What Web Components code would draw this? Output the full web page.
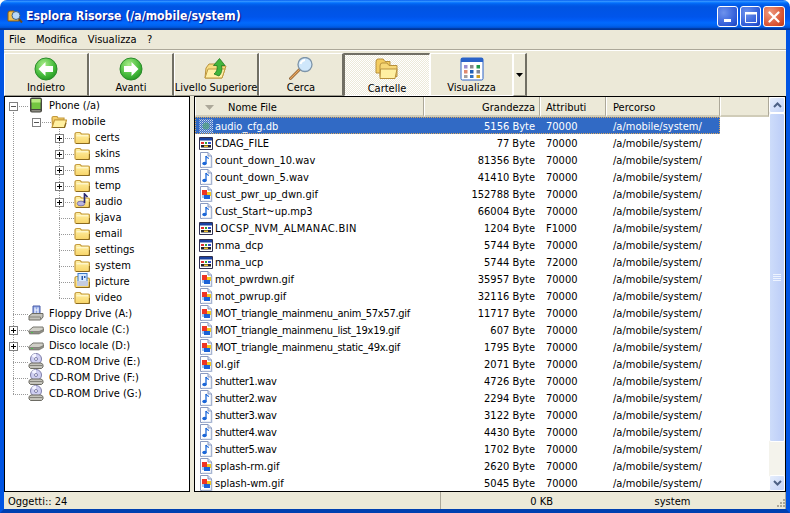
<!DOCTYPE html>
<html><head><meta charset="utf-8"><title>Esplora Risorse</title>
<style>
html,body{margin:0;padding:0;background:#fff;}
body{width:790px;height:513px;overflow:hidden;font:11px "DejaVu Sans Condensed","DejaVu Sans",sans-serif;font-stretch:condensed;color:#000;}
</style></head><body>
<x-window>
  <x-titlebar slot="title">Esplora Risorse (/a/mobile/system)</x-titlebar>
  <x-menubar slot="menu"><span>File</span><span>Modifica</span><span>Visualizza</span><span>?</span></x-menubar>
  <x-toolbar slot="toolbar">
    <x-tool icon="back" label="Indietro" w="85"></x-tool>
    <x-tool icon="forward" label="Avanti" w="85"></x-tool>
    <x-tool icon="up" label="Livello Superiore" w="85"></x-tool>
    <x-tool icon="search" label="Cerca" w="85"></x-tool>
    <x-tool icon="folders" label="Cartelle" w="86" pressed></x-tool>
    <x-tool icon="views" label="Visualizza" w="83" flat></x-tool>
    <x-tool w="14" drop></x-tool>
  </x-toolbar>
  <x-tree slot="tree"></x-tree>
  <x-files slot="files"></x-files>
  <x-status slot="status"></x-status>
</x-window>
<script>
const FOLDER=`<defs><linearGradient id="f" x1="0" y1="0" x2="0" y2="1"><stop offset="0" stop-color="#fff2a8"/><stop offset="1" stop-color="#f8d468"/></linearGradient></defs><path d="M1 5.500Q1 3.500 3 3.500H6L7.500 5H14Q15.500 5 15.500 6.500V13Q15.500 14.500 14 14.500H2.500Q1 14.500 1 13Z" fill="url(#f)" stroke="#c49a3c" stroke-width="1.200"/><path d="M2.500 6.800H14" stroke="#fffbe0"/><path d="M2 14.500H14.500Q15.500 14.500 15.500 13V9" fill="none" stroke="#8a6a20" stroke-width="1.200"/>`;
const GEM=`<rect x="4" y="4" width="5" height="5" fill="#ee3524"/><rect x="9" y="6" width="4" height="4" fill="#f4c81c"/><rect x="6" y="9" width="6" height="4" fill="#1a62d8"/><rect x="4" y="9" width="2" height="3" fill="#9ec6f4"/>`;
const PAGE=`<path d="M2.500 .5H10L13.500 4V15.500H2.500Z" fill="#fff" stroke="#8a9ac0"/><path d="M10 .5V4H13.500" fill="#d4def0" stroke="#8a9ac0"/><path d="M13.500 5V15.500H4" fill="none" stroke="#b8c4dc" stroke-width="2" opacity=".6"/>`;
const ICONS={
 phone:[16,`<rect x="2" y="0.500" width="12" height="15" rx="2" fill="#46463e"/><rect x="3.500" y="2" width="9" height="10" fill="#74c640"/><rect x="3.500" y="2" width="9" height="3.500" fill="#b8ea80"/><rect x="3.500" y="13" width="9" height="1.500" fill="#8c8b82"/>`],
 folder:[16,FOLDER],
 open:[16,`<path d="M1 5Q1 3.500 2.500 3.500H6L7 5H13V7H4L1.500 13Z" fill="#f6d06c" stroke="#c49a3c" stroke-width="1.200"/><path d="M3.500 7H15.500L13.500 14.500H1Z" fill="#fff0a0" stroke="#c49a3c" stroke-width="1.200"/><path d="M1.500 14.500H13.500L15 10" fill="none" stroke="#8a6a20" stroke-width="1.200"/>`],
 audio:[16,FOLDER+`<ellipse cx="7" cy="10.500" rx="3.800" ry="2.400" fill="#b8b4e0" stroke="#605a9a" stroke-width=".7"/><path d="M10.500 10V1L13.500 4" fill="none" stroke="#2a2a70" stroke-width="1.700"/>`],
 picture:[16,FOLDER+`<rect x="4" y="0.500" width="9" height="8" fill="#d8eaff" stroke="#3a78c8"/><rect x="7.500" y="3" width="1.500" height="4" fill="#2858a8"/><rect x="10" y="3" width="1.500" height="2" fill="#2858a8"/><rect x="3" y="8" width="11" height="5" fill="#c4cce0"/>`],
 floppy:[16,`<path d="M5 1H12V9H5Z" fill="#8ea6e6" stroke="#4a5ca8"/><path d="M7 2.500V8M10 2.500V8M7 5H10" stroke="#f4f6ff" stroke-width="1.200"/><path d="M1 11L4 8.500H15V12L12.500 15H1Z" fill="#c4c3bb" stroke="#6c6b63"/><path d="M1 12H12.500V14.500" fill="none" stroke="#84837b"/>`],
 hdd:[16,`<path d="M.5 10L5 6H15L15.500 9L11 12H1.500Z" fill="#d0cfc7" stroke="#77766e"/><path d="M1.500 10.500H11L15.500 8.500V10.500L11 13H1.500Z" fill="#8f8e86" stroke="#6c6b63" stroke-width=".6"/><rect x="3" y="11" width="2" height="1" fill="#50c050"/>`],
 cd:[16,`<circle cx="8" cy="6" r="5.500" fill="#cfcff2" stroke="#7e7ea8"/><path d="M8 6L3.500 3A5.500 5.500 0 0 1 8 .5Z" fill="#f4f4ff"/><circle cx="8" cy="6" r="1.500" fill="#fff" stroke="#7e7ea8"/><path d="M1 11.500L3 10H13L15 11.500V14L13.500 15.500H2.500L1 14Z" fill="#c4c3bb" stroke="#6c6b63"/><path d="M1.500 12.500H14.500" stroke="#84837b"/>`],
 db:[16,`<defs><pattern id="d" width="2" height="2" patternUnits="userSpaceOnUse"><rect width="2" height="2" fill="#3d6fc2"/><rect width="1" height="1" fill="#c8d8f0"/><rect x="1" y="1" width="1" height="1" fill="#8fa8d8"/></pattern></defs><rect x="1" y="1" width="14" height="14" fill="url(#d)"/><circle cx="8" cy="8" r="3.500" fill="#4f9f7f" fill-opacity=".75"/>`],
 app:[16,`<path d="M1.500 2.500H14.500V14.500H1.500Z" fill="#fff" stroke="#303050"/><rect x="2" y="3" width="12" height="2.500" fill="#1840a0"/><rect x="3" y="7" width="3" height="2" fill="#e03030"/><rect x="7" y="7" width="2" height="2" fill="#30a030"/><rect x="10" y="7" width="3" height="2" fill="#3050d0"/><rect x="3" y="10" width="10" height="2.500" fill="#20202a"/><rect x="6" y="10.500" width="4" height="1.500" fill="#f0c030"/>`],
 wav:[16,PAGE+`<path d="M8 4V11.500" stroke="#1a66d8" stroke-width="1.300"/><path d="M8 4Q9 6 11 6.500" fill="none" stroke="#1a66d8" stroke-width="1.200"/><ellipse cx="6.500" cy="11.500" rx="2.200" ry="1.700" fill="#1a66d8"/>`],
 gif:[16,PAGE+GEM],
 back:[24,`<defs><radialGradient id="g" cx=".4" cy=".3" r=".8"><stop offset="0" stop-color="#a8ec88"/><stop offset=".6" stop-color="#46bb3c"/><stop offset="1" stop-color="#1c8c1c"/></radialGradient></defs><circle cx="12" cy="12" r="11" fill="url(#g)" stroke="#2a8a2a"/><path d="M4.500 12L11.500 5V9H19V15H11.500V19Z" fill="#fff"/>`],
 forward:[24,`<defs><radialGradient id="h" cx=".4" cy=".3" r=".8"><stop offset="0" stop-color="#a8ec88"/><stop offset=".6" stop-color="#46bb3c"/><stop offset="1" stop-color="#1c8c1c"/></radialGradient></defs><circle cx="12" cy="12" r="11" fill="url(#h)" stroke="#2a8a2a"/><path d="M19.500 12L12.500 5V9H5V15H12.500V19Z" fill="#fff"/>`],
 up:[24,`<path d="M2 11L5 7H13L15 9H22L18 21H1Z" fill="#f7dc82" stroke="#b8913c"/><path d="M4 12H21L18 21H1Z" fill="#fff0a8" stroke="#c09a40"/><path d="M15 19Q19 15 17.500 8.500H21L15.500 1.500L9.500 8.500H13Q14 14 10 17Z" fill="#43b53c" stroke="#207a20" stroke-width=".8"/>`],
 search:[24,`<path d="M1.500 21.500L10.500 12.500" stroke="#8a5a2a" stroke-width="2.800" stroke-linecap="round"/><path d="M1.500 21.500L10.500 12.500" stroke="#e8a860" stroke-width="1.200" stroke-linecap="round"/><circle cx="16" cy="7.500" r="7" fill="#cfe7fb" stroke="#7d94a8" stroke-width="1.300"/><path d="M11.500 7Q12.500 3.500 16 3" fill="none" stroke="#fff" stroke-width="1.800"/>`],
 folders:[24,`<path d="M1 6Q1 3 3 3H8L10 5.500H15V17H1Z" fill="#f4cd60" stroke="#b8913c"/><path d="M5 10Q5 7 7 7H12L14 9.500H22V20.500H5Z" fill="#f7d878" stroke="#b8913c"/><path d="M5.500 13H22L20 22.500H5Z" fill="#fff0a2" stroke="#b8913c"/>`],
 views:[24,`<rect x="1" y="1" width="22" height="22" rx="1.500" fill="#fff" stroke="#2a63c8"/><rect x="1" y="1" width="22" height="4" fill="#2a63c8"/><g fill="#9b8fd0"><rect x="4" y="8" width="3.500" height="3.500"/></g><rect x="10" y="8" width="3.500" height="3.500" fill="#8a8a8a"/><rect x="16.500" y="8" width="3.500" height="3.500" fill="#1f9a4a"/><rect x="4" y="13" width="3.500" height="3.500" fill="#e08a70"/><rect x="10" y="13" width="3.500" height="3.500" fill="#2060b8"/><rect x="16.500" y="13" width="3.500" height="3.500" fill="#808898"/><rect x="4" y="18" width="3.500" height="3" fill="#a0a0a0"/><rect x="10" y="18" width="3.500" height="3" fill="#3070c0"/><rect x="16.500" y="18" width="3.500" height="3" fill="#d0a020"/>`],
 app16:[16,`<path d="M1 5Q1 3 3 3H7L8 5H12V13H1Z" fill="#f0c050" stroke="#8a5a10"/><circle cx="9" cy="7.500" r="4" fill="#b8d8f8" stroke="#406080"/><path d="M12 11L15 14.500" stroke="#6a4a20" stroke-width="2"/>`]
};
let uid=0;
function svg(name){const [s,b]=ICONS[name];const u='u'+(++uid);
  const body=b.replace(/id="(\w)"/g,`id="$1${u}"`).replace(/url\(#(\w)\)/g,`url(#$1${u})`);
  return `<svg xmlns="http://www.w3.org/2000/svg" width="${s}" height="${s}" viewBox="0 0 ${s} ${s}" style="display:block;flex:none">${body}</svg>`;}
function def(tag,fn,css,html){customElements.define(tag,class extends HTMLElement{
  constructor(){super();this.attachShadow({mode:'open'});}
  connectedCallback(){this.shadowRoot.innerHTML=`<style>${css}</style>`+(fn?fn(this):html);}
});}
const F='font:11px "DejaVu Sans Condensed","DejaVu Sans",sans-serif;font-stretch:condensed;';

def('x-window',null,`
:host{display:flex;flex-direction:column;width:790px;height:513px;box-sizing:border-box;background:#ECE9D8;border-radius:7px 7px 0 0;overflow:hidden;}
.body{flex:1;display:flex;flex-direction:column;min-height:0;border-left:4px solid #0054E3;border-right:4px solid #0054E3;border-bottom:4px solid #0040B0;}
.split{flex:1;display:flex;gap:4px;min-height:0;}
`,`<slot name="title"></slot><div class="body"><slot name="menu"></slot><slot name="toolbar"></slot>
<div class="split"><slot name="tree"></slot><slot name="files"></slot></div><slot name="status"></slot></div>`);

def('x-titlebar',h=>`${svg('app16')}<span><slot></slot></span><i class="b">${'<svg width="12" height="12" viewBox="0 0 12 12"><rect x="2" y="8" width="7" height="3" fill="#fff"/></svg>'}</i><i class="b">${'<svg width="12" height="12" viewBox="0 0 12 12"><path d="M.5 1.500H11.500V11.500H.5Z" fill="none" stroke="#fff"/><rect y="1" width="12" height="2.500" fill="#fff"/></svg>'}</i><i class="b x">${'<svg width="12" height="12" viewBox="0 0 12 12"><path d="M1.500 1.500L10.500 10.500M10.500 1.500L1.500 10.500" stroke="#fff" stroke-width="2.200" stroke-linecap="round"/></svg>'}</i>`,`
:host{display:flex;align-items:center;height:30px;box-sizing:border-box;padding:2px 5px 0 7px;color:#fff;font:bold 12.2px "DejaVu Sans Condensed","DejaVu Sans",sans-serif;font-stretch:condensed;text-shadow:1px 1px 1px #0f1089;
background:linear-gradient(to bottom,#0058EE 0,#3593FF 4%,#288EFF 6%,#127DFF 8%,#036FFC 10%,#0262EE 14%,#0057E5 20%,#0054E3 24%,#0055EB 56%,#005BF5 66%,#026AFE 76%,#0062EF 86%,#0052D6 92%,#0040AB 94%,#003092 100%);}
span{flex:1;margin-left:3px;white-space:nowrap;}
.b{flex:none;display:flex;align-items:center;justify-content:center;width:21px;height:21px;box-sizing:border-box;margin:0 0 1px 2px;align-self:flex-start;margin-top:4px;border:1px solid #fff;border-radius:3px;background:radial-gradient(circle at 30% 30%,#6d92ec,#2a57d6 75%,#1c3fb0);}
.x{background:radial-gradient(circle at 30% 30%,#ee9a80,#d8502e 70%,#b83a18);width:22px;}
`);

def('x-menubar',null,`
:host{display:flex;height:20px;box-sizing:border-box;align-items:center;padding-left:5px;gap:10.500px;border-bottom:1px solid #ACA899;${F}}
::slotted(span){white-space:nowrap;}
`,`<slot></slot>`);

def('x-toolbar',null,`
:host{display:flex;height:46px;box-sizing:border-box;padding-top:2px;border-top:1px solid #fff;}
`,`<slot></slot>`);

def('x-tool',h=>{
  const a=k=>h.getAttribute(k);
  if(h.hasAttribute('drop'))return `<svg width="7" height="4" viewBox="0 0 7 4"><path d="M0 0H7L3.500 4Z" fill="#000"/></svg>`;
  return `${svg(a('icon'))}<span>${a('label')}</span>`;
},`
:host{display:flex;flex-direction:column;align-items:center;box-sizing:border-box;height:43px;flex:none;padding-top:3px;gap:0;border:1px solid;border-color:#fff #716F64 #9d9b8e #fff;border-right-width:2px;${F}white-space:nowrap;}
:host([pressed]){background-color:#f4f2e8;background-image:repeating-conic-gradient(#ECE9D8 0 25%,#fff 0 50%);background-size:2px 2px;border-color:#716F64 #fff #fff #716F64;border-width:2px 1px 1px 1px;padding-top:1px;gap:2px;}
:host([flat]){border-color:#fff;border-right:1px solid #fff;}
:host([drop]){justify-content:center;padding:0;border-left:1px solid #fff;}
span{line-height:13px;}
`);
document.querySelectorAll('x-tool').forEach(e=>{e.style.width=e.getAttribute('w')+'px';});

def('x-tree-row',h=>{
  const lv=+h.getAttribute('level');const through=(h.getAttribute('guides')||'').split(',').filter(Boolean).map(Number);
  const kind=h.getAttribute('kind')||'tee';const box=h.getAttribute('box');
  let c='';
  for(let i=0;i<lv;i++)c+=`<div class="cell ${through.includes(i)?'v':''}"></div>`;
  const bx=box?`<svg class="bx" width="9" height="9" viewBox="0 0 9 9"><rect x=".5" y=".5" width="8" height="8" fill="#fff" stroke="#808080"/><path d="M2 4.500H7${box==='plus'?'M4.500 2V7':''}" stroke="${box==='plus'?'#000':'#555'}"/></svg>`:'';
  c+=`<div class="cell h ${kind}">${bx}</div>`;
  return c+svg(h.getAttribute('icon'))+`<span><slot></slot></span>`;
},`
:host{display:flex;height:16px;${F}white-space:nowrap;}
.cell{width:23px;height:16px;flex:none;box-sizing:border-box;}
.bx{display:block;margin:5px 0 0 4px;}
.v{background-repeat:no-repeat;background-image:repeating-linear-gradient(to bottom,#999 0 1px,transparent 1px 2px);background-size:1px 16px;background-position:8px 0;}
.h{background-image:repeating-linear-gradient(to right,#999 0 1px,transparent 1px 2px),repeating-linear-gradient(to bottom,#999 0 1px,transparent 1px 2px);background-repeat:no-repeat;background-size:15px 1px,1px 16px;background-position:8px 9px,8px 0;}
.h.elbow{background-size:15px 1px,1px 9px;}
.h.first{background-size:15px 1px,1px 7px;background-position:8px 9px,8px 9px;}
.h.none{background-size:15px 1px,0 0;}
span{margin-left:5px;line-height:16px;padding-top:1px;}
`);

def('x-tree',h=>{
  const rows=[
   [0,'','first','minus','phone','Phone (/a)'],
   [1,'0','none','minus','open','mobile'],
   [2,'0','tee','plus','folder','certs'],[2,'0','tee','plus','folder','skins'],[2,'0','tee','plus','folder','mms'],[2,'0','tee','plus','folder','temp'],[2,'0','tee','plus','audio','audio'],
   [2,'0','tee','','folder','kjava'],[2,'0','tee','','folder','email'],[2,'0','tee','','folder','settings'],[2,'0','tee','','folder','system'],[2,'0','tee','','picture','picture'],[2,'0','elbow','','folder','video'],
   [0,'','tee','','floppy','Floppy Drive (A:)'],[0,'','tee','plus','hdd','Disco locale (C:)'],[0,'','tee','plus','hdd','Disco locale (D:)'],
   [0,'','tee','','cd','CD-ROM Drive (E:)'],[0,'','tee','','cd','CD-ROM Drive (F:)'],[0,'','elbow','','cd','CD-ROM Drive (G:)']];
  return rows.map(r=>`<x-tree-row level="${r[0]}" guides="${r[1]}" kind="${r[2]}" box="${r[3]}" icon="${r[4]}">${r[5]}</x-tree-row>`).join('');
},`
:host{display:block;width:186px;height:100%;box-sizing:border-box;background:#fff;border:1px solid #000;overflow:hidden;}
`);

def('x-col',null,`
:host{display:flex;align-items:center;box-sizing:border-box;height:20px;padding-top:2px;background:#ECE9D8;border-right:1px solid #ACA899;border-left:1px solid #fff;border-bottom:2px solid #D0CCB8;${F}white-space:nowrap;overflow:hidden;}
:host([end]){justify-content:flex-end;padding-right:4px;}
`,`<slot></slot>`);

def('x-file-row',h=>{
  const a=k=>h.getAttribute(k);
  const ls=h.getAttribute('ls');
  return `<div class="n">${svg(a('type'))}<span${ls?` style="letter-spacing:${ls}px"`:''}>${a('name')}</span></div><div class="s">${a('size')} Byte</div><div class="a">${a('attr')}</div><div class="p">/a/mobile/system/</div>`;
},`
:host{display:grid;grid-template-columns:229px 116px 66px 114px;width:525px;height:17px;box-sizing:border-box;align-items:center;${F}white-space:nowrap;}
:host([sel]){background:#316AC5;color:#fff;outline:1px dotted #d8a860;outline-offset:-1px;}
.n{display:flex;align-items:center;padding-left:3px;}
.n span{margin-left:1px;padding-top:1px;}
.s{text-align:right;padding-right:5px;padding-top:1px;}
.a{padding-left:6px;padding-top:1px;}
.p{padding-left:7px;padding-top:1px;}
`);

def('x-scrollbar',()=>{
  const chev=d=>`<svg width="9" height="6" viewBox="0 0 9 6"><path d="${d}" fill="none" stroke="#4d6185" stroke-width="2"/></svg>`;
  return `<div class="btn">${chev('M1 5L4.500 1.500L8 5')}</div><div class="thumb"><svg width="8" height="8" viewBox="0 0 8 8"><path d="M0 .5H8M0 2.500H8M0 4.500H8M0 6.500H8" stroke="#eef4ff"/></svg></div><div class="track"></div><div class="btn">${chev('M1 1L4.500 4.500L8 1')}</div>`;
},`
:host{display:flex;flex-direction:column;width:16px;flex:none;background:#F4F3EC;}
.btn{flex:none;height:16px;box-sizing:border-box;display:flex;align-items:center;justify-content:center;background:linear-gradient(135deg,#e6eefc,#c3d3f8);border:1px solid #fff;border-radius:2px;}
.thumb{flex:none;height:329px;box-sizing:border-box;display:flex;align-items:center;justify-content:center;background:linear-gradient(to right,#cddcfa,#bccdf8);border:1px solid #fff;border-radius:2px;}
.track{flex:1;}
`);

def('x-files',h=>{
  const D=[['audio_cfg.db',5156,'70000','db'],['CDAG_FILE',77,'70000','app'],['count_down_10.wav',81356,'70000','wav'],['count_down_5.wav',41410,'70000','wav'],['cust_pwr_up_dwn.gif',152788,'70000','gif'],['Cust_Start~up.mp3',66004,'70000','wav'],['LOCSP_NVM_ALMANAC.BIN',1204,'F1000','app','.4'],['mma_dcp',5744,'70000','app'],['mma_ucp',5744,'72000','app'],['mot_pwrdwn.gif',35957,'70000','gif'],['mot_pwrup.gif',32116,'70000','gif'],['MOT_triangle_mainmenu_anim_57x57.gif',11717,'70000','gif','-.27'],['MOT_triangle_mainmenu_list_19x19.gif',607,'70000','gif','-.27'],['MOT_triangle_mainmenu_static_49x.gif',1795,'70000','gif','-.27'],['ol.gif',2071,'70000','gif'],['shutter1.wav',4726,'70000','wav','-.3'],['shutter2.wav',2294,'70000','wav','-.3'],['shutter3.wav',3122,'70000','wav','-.3'],['shutter4.wav',4430,'70000','wav','-.3'],['shutter5.wav',1702,'70000','wav','-.3'],['splash-rm.gif',2620,'70000','gif'],['splash-wm.gif',5045,'70000','gif']];
  return `<div class="main"><div class="head">
  <x-col style="width:229px"><svg width="9" height="5" viewBox="0 0 9 5" style="margin:0 14px 0 9px;flex:none"><path d="M0 0H9L4.500 5Z" fill="#aca899"/></svg>Nome File</x-col>
  <x-col style="width:116px" end>Grandezza</x-col>
  <x-col style="width:66px"><span style="padding-left:5px">Attributi</span></x-col>
  <x-col style="width:114px"><span style="padding-left:6px">Percorso</span></x-col>
  <x-col style="flex:1"></x-col></div>
  <div class="rows">${D.map((r,i)=>`<x-file-row ${i==0?'sel':''} ${r[4]?`ls="${r[4]}"`:''} name="${r[0]}" size="${r[1]}" attr="${r[2]}" type="${r[3]}"></x-file-row>`).join('')}</div></div>
  <x-scrollbar></x-scrollbar>`;
},`
:host{display:flex;flex:1;min-width:0;height:100%;box-sizing:border-box;background:#fff;border:1px solid #000;overflow:hidden;}
.main{flex:1;min-width:0;display:flex;flex-direction:column;}
.head{display:flex;flex:none;}
.rows{flex:1;overflow:hidden;}
`);

def('x-status',()=>`<div class="c" style="width:437px;padding-left:4px">Oggetti:: 24</div><div class="c" style="width:119px;justify-content:flex-end;padding-right:7px">0 KB</div><div class="c" style="flex:1;justify-content:center">system</div><svg class="g" width="12" height="12" viewBox="0 0 12 12"><g fill="#aca899"><rect x="9" y="2" width="2" height="2"/><rect x="6" y="5" width="2" height="2"/><rect x="9" y="5" width="2" height="2"/><rect x="3" y="8" width="2" height="2"/><rect x="6" y="8" width="2" height="2"/><rect x="9" y="8" width="2" height="2"/></g></svg>`,`
:host{display:flex;height:17px;box-sizing:border-box;align-items:stretch;${F}white-space:nowrap;}
.c{display:flex;align-items:center;box-sizing:border-box;border-right:1px solid #ACA899;padding-top:2px;}
.c:nth-child(3){border-right:0;}
.g{align-self:flex-end;flex:none;margin-left:-12px;}
`);
</script>
</body></html>
